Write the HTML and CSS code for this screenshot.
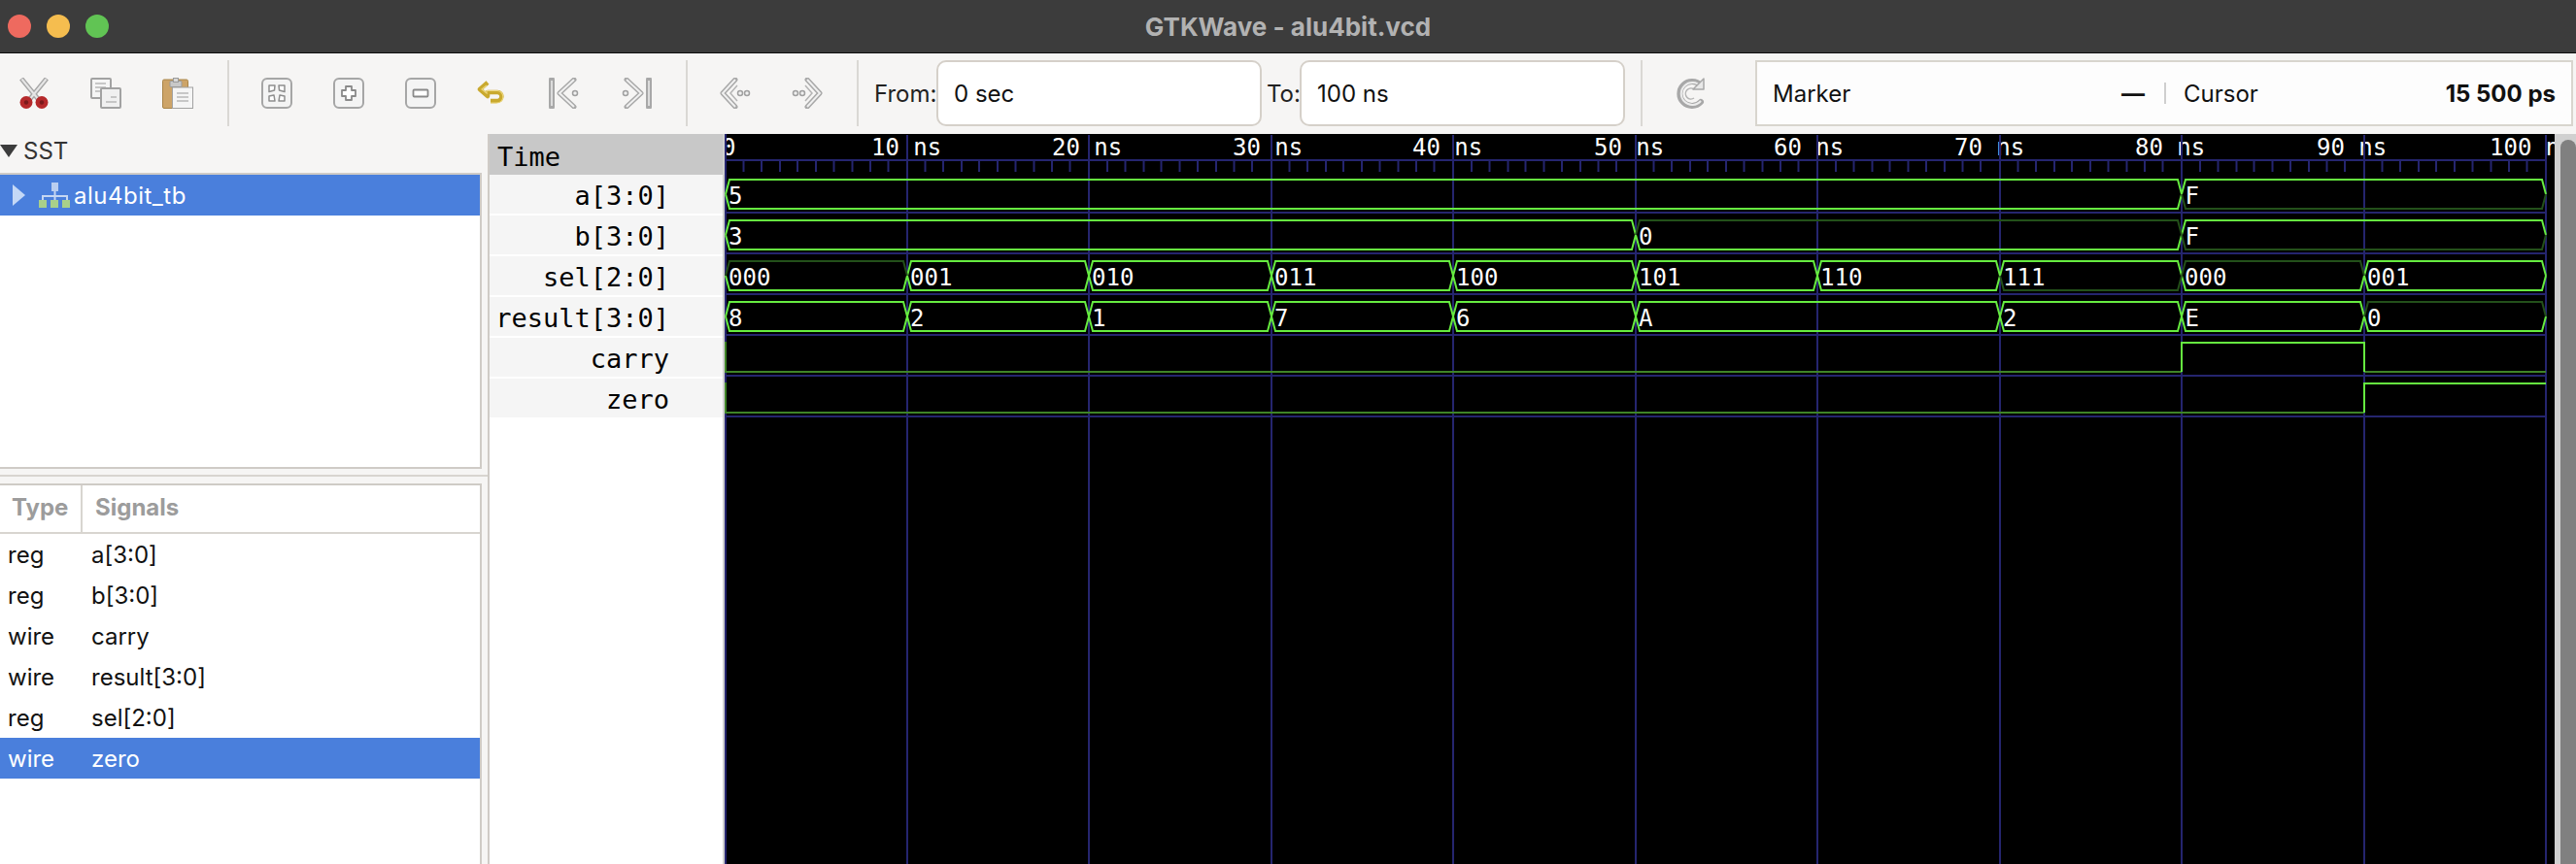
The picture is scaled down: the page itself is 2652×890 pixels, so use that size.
FILE: index.html
```html
<!DOCTYPE html>
<html lang="en">
<head>
  <meta charset="UTF-8" />
  <title>GTKWave - alu4bit.vcd</title>
  <link rel="stylesheet" href="styles.css">
</head>
<body>
  <div class="titlebar">
    <div class="lights">
      <span class="light red"></span>
      <span class="light yellow"></span>
      <span class="light green"></span>
    </div>
    <div class="title">GTKWave - alu4bit.vcd</div>
  </div>

  <div class="toolbar">
    <div class="tools first">
      <div class="tool">
        <svg viewBox="0 0 32 32" class="icon">
          <path d="M3 1 L21 23 M29 1 L11 23" stroke="#a6a6a6" stroke-width="5" fill="none"/>
          <path d="M3.500 1.500 L21 23 M28.500 1.500 L11 23" stroke="#e6e6e6" stroke-width="2" fill="none"/>
          <circle cx="8" cy="25.500" r="6.500" fill="#b5292b"/>
          <circle cx="24" cy="25.500" r="6.500" fill="#b5292b"/>
          <circle cx="8" cy="25.500" r="2.200" fill="#7a1a1c"/>
          <circle cx="24" cy="25.500" r="2.200" fill="#7a1a1c"/>
        </svg>
      </div>
      <div class="tool">
        <svg viewBox="0 0 32 32" class="icon">
          <rect x="1" y="1" width="20" height="20" rx="1" fill="#f5f5f5" stroke="#a2a2a2" stroke-width="2"/>
          <path d="M5 6H16M5 10H16M5 14H12" stroke="#b8b8b8" stroke-width="1.500"/>
          <rect x="11" y="11" width="20" height="20" rx="1" fill="#f0f0f0" stroke="#a2a2a2" stroke-width="2"/>
          <path d="M21 20H27M16 25H27" stroke="#b8b8b8" stroke-width="1.500"/>
        </svg>
      </div>
      <div class="tool">
        <svg viewBox="0 0 32 32" class="icon">
          <rect x="0.500" y="2" width="26" height="29.500" rx="1.500" fill="#cda468" stroke="#a98548"/>
          <rect x="10.500" y="10" width="21" height="21.500" fill="#f5f5f5" stroke="#a2a2a2"/>
          <rect x="8" y="3.500" width="12" height="6" rx="1" fill="#c8c8c8" stroke="#9a9a9a"/>
          <rect x="11.500" y="0.500" width="5" height="4" fill="#d8d8d8" stroke="#9a9a9a"/>
          <path d="M15 16H27M15 20H27M15 24H27" stroke="#b8b8b8" stroke-width="1.500"/>
        </svg>
      </div>
    </div>
    <div class="sep"></div>
    <div class="tools">
      <div class="tool">
        <svg viewBox="0 0 32 32" class="icon">
          <rect x="1" y="1" width="30" height="30" rx="5" fill="#f4f4f4" stroke="#a6a6a6" stroke-width="2"/>
          <path d="M8 8H14L13.500 13L8 14.500Z M24 8H18L18.500 13L24 14.500Z M8 24V19L13 18L14 24Z M24 24V19L19 18L18 24Z" fill="#fff" stroke="#8e8e8e" stroke-width="1.500" stroke-linejoin="round"/>
        </svg>
      </div>
      <div class="tool">
        <svg viewBox="0 0 32 32" class="icon">
          <rect x="1" y="1" width="30" height="30" rx="5" fill="#f4f4f4" stroke="#a6a6a6" stroke-width="2"/>
          <path d="M13 9H19V13H23V19H19V23H13V19H9V13H13Z" fill="#fff" stroke="#8a8a8a" stroke-width="1.800" stroke-linejoin="round"/>
        </svg>
      </div>
      <div class="tool">
        <svg viewBox="0 0 32 32" class="icon">
          <rect x="1" y="1" width="30" height="30" rx="5" fill="#f4f4f4" stroke="#a6a6a6" stroke-width="2"/>
          <rect x="8.500" y="12.500" width="15" height="7" rx="1" fill="#fff" stroke="#8a8a8a" stroke-width="1.800"/>
        </svg>
      </div>
      <div class="tool">
        <svg viewBox="0 0 32 32" class="icon">
          <path d="M11 5 L3 12 L11 19 V15 H21 C27 15 27 24 20 24 H14" fill="none" stroke="#c9a92e" stroke-width="4.500" stroke-linejoin="round"/>
          <path d="M10 8 L5 12 L10 16 V13.500 H21 C29 14 29 26 20 26 H14" fill="none" stroke="#ecd67a" stroke-width="1.200"/>
        </svg>
      </div>
      <div class="tool">
        <svg viewBox="0 0 32 32" class="icon">
          <path d="M3 2V30" stroke="#a8a8a8" stroke-width="6" stroke-linecap="round"/>
          <path d="M3 3V29" stroke="#dcdcdc" stroke-width="2"/>
          <path d="M26 2 L11 16 L26 30" fill="none" stroke="#a8a8a8" stroke-width="5" stroke-linejoin="round" stroke-linecap="round"/>
          <path d="M26 2 L11 16 L26 30" fill="none" stroke="#f0f0f0" stroke-width="2"/>
          <circle cx="27" cy="16" r="2.500" fill="#f0f0f0" stroke="#a0a0a0" stroke-width="1.500"/>
        </svg>
      </div>
      <div class="tool">
        <svg viewBox="0 0 32 32" class="icon mirror">
          <path d="M3 2V30" stroke="#a8a8a8" stroke-width="6" stroke-linecap="round"/>
          <path d="M3 3V29" stroke="#dcdcdc" stroke-width="2"/>
          <path d="M26 2 L11 16 L26 30" fill="none" stroke="#a8a8a8" stroke-width="5" stroke-linejoin="round" stroke-linecap="round"/>
          <path d="M26 2 L11 16 L26 30" fill="none" stroke="#f0f0f0" stroke-width="2"/>
          <circle cx="27" cy="16" r="2.500" fill="#f0f0f0" stroke="#a0a0a0" stroke-width="1.500"/>
        </svg>
      </div>
    </div>
    <div class="sep"></div>
    <div class="tools">
      <div class="tool">
        <svg viewBox="0 0 32 32" class="icon">
          <path d="M16 2 L3 16 L16 30" fill="none" stroke="#a8a8a8" stroke-width="5" stroke-linejoin="round" stroke-linecap="round"/>
          <path d="M16 2 L3 16 L16 30" fill="none" stroke="#f0f0f0" stroke-width="2"/>
          <path d="M18 8 L11 16 L18 24" fill="none" stroke="#b4b4b4" stroke-width="1.500"/>
          <circle cx="21" cy="16" r="2.500" fill="#f0f0f0" stroke="#a0a0a0" stroke-width="1.500"/>
          <circle cx="28" cy="16" r="2.500" fill="#f0f0f0" stroke="#a0a0a0" stroke-width="1.500"/>
        </svg>
      </div>
      <div class="tool">
        <svg viewBox="0 0 32 32" class="icon mirror">
          <path d="M16 2 L3 16 L16 30" fill="none" stroke="#a8a8a8" stroke-width="5" stroke-linejoin="round" stroke-linecap="round"/>
          <path d="M16 2 L3 16 L16 30" fill="none" stroke="#f0f0f0" stroke-width="2"/>
          <path d="M18 8 L11 16 L18 24" fill="none" stroke="#b4b4b4" stroke-width="1.500"/>
          <circle cx="21" cy="16" r="2.500" fill="#f0f0f0" stroke="#a0a0a0" stroke-width="1.500"/>
          <circle cx="28" cy="16" r="2.500" fill="#f0f0f0" stroke="#a0a0a0" stroke-width="1.500"/>
        </svg>
      </div>
    </div>
    <div class="sep"></div>
    <span class="field-label from">From:</span>
    <div class="field">0 sec</div>
    <span class="field-label to">To:</span>
    <div class="field">100 ns</div>
    <div class="sep last"></div>
    <div class="tool">
      <svg viewBox="0 0 32 32" class="icon">
        <path d="M25 8 A12.500 12.500 0 1 0 25 25" fill="none" stroke="#a8a8a8" stroke-width="6" stroke-linecap="round"/>
        <path d="M25 9 A11.500 11.500 0 1 0 25 24" fill="none" stroke="#ececec" stroke-width="2"/>
        <path d="M18 12 A5.500 5.500 0 1 0 18 21" fill="none" stroke="#b4b4b4" stroke-width="1.500"/>
        <path d="M28 1 V12 H17 Z" fill="#e8e8e8" stroke="#a8a8a8" stroke-width="1.500" stroke-linejoin="round"/>
      </svg>
    </div>
    <div class="info">
      <div class="info-part marker">
        <span>Marker</span>
        <span class="info-value">—</span>
      </div>
      <div class="info-sep"></div>
      <div class="info-part cursor">
        <span>Cursor</span>
        <span class="info-value">15 500 ps</span>
      </div>
    </div>
  </div>

  <div class="main">
    <div class="sidebar">
      <div class="sst-head">
        <span class="sst-arrow"></span>
        <span>SST</span>
      </div>
      <div class="tree">
        <div class="tree-row">
          <span class="tree-arrow"></span>
          <svg viewBox="0 0 32 26" class="tree-icon">
            <rect x="13" y="0" width="7" height="9" fill="#b9cdf0"/>
            <path d="M16.500 9V14 M4 19V14H29V19 M16.500 14V19" stroke="#c5d6f2" stroke-width="2" fill="none"/>
            <rect x="0" y="18" width="8" height="8" fill="#a9d08a"/>
            <rect x="12" y="18" width="8" height="8" fill="#a9d08a"/>
            <rect x="24" y="18" width="8" height="8" fill="#a9d08a"/>
          </svg>
          <span class="tree-label">alu4bit_tb</span>
        </div>
      </div>
      <div class="pane-handle"></div>
      <div class="signals">
        <div class="signals-head">
          <div class="col-type">Type</div>
          <div class="col-name">Signals</div>
        </div>
        <div class="signal-row"><span class="cell-type">reg</span><span>a[3:0]</span></div>
        <div class="signal-row"><span class="cell-type">reg</span><span>b[3:0]</span></div>
        <div class="signal-row"><span class="cell-type">wire</span><span>carry</span></div>
        <div class="signal-row"><span class="cell-type">wire</span><span>result[3:0]</span></div>
        <div class="signal-row"><span class="cell-type">reg</span><span>sel[2:0]</span></div>
        <div class="signal-row selected"><span class="cell-type">wire</span><span>zero</span></div>
      </div>
    </div>

    <div class="names">
      <div class="names-head">Time</div>
      <div class="name-row">a[3:0]</div>
      <div class="name-row">b[3:0]</div>
      <div class="name-row">sel[2:0]</div>
      <div class="name-row">result[3:0]</div>
      <div class="name-row">carry</div>
      <div class="name-row">zero</div>
    </div>

    <div class="wave">
      <svg class="wave-svg" viewBox="746 138 1884 752" width="1884" height="752">
        <!-- ruler labels -->
        <g class="ruler-text">
          <text x="743" y="160">0</text>
          <text x="897" y="160">10 ns</text>
          <text x="1083" y="160">20 ns</text>
          <text x="1269" y="160">30 ns</text>
          <text x="1454" y="160">40 ns</text>
          <text x="1641" y="160">50 ns</text>
          <text x="1826" y="160">60 ns</text>
          <text x="2012" y="160">70 ns</text>
          <text x="2198" y="160">80 ns</text>
          <text x="2385" y="160">90 ns</text>
          <text x="2563" y="160">100 ns</text>
        </g>
        <!-- grid -->
        <path class="grid" d="M747 138V890M934 139V890M1121 139V890M1309 139V890M1496 139V890M1684 139V890M1871 139V890M2059 139V890M2246 139V890M2434 139V890M2621 139V890"/>
        <path class="grid" d="M746 165H2621M746 219H2621M746 261H2621M746 303H2621M746 345H2621M746 387H2621M746 429H2621"/>
        <path class="grid ticks" d="M765.500 165v12m18.500-12v12m19-12v12m18-12v12m19-12v12m18.500-12v12m19-12v12m18.500-12v12m18.500-12v12
          M952.500 165v12m18.500-12v12m19-12v12m18-12v12m19-12v12m18.500-12v12m19-12v12m18.500-12v12m18.500-12v12
          M1140 165v12m18.500-12v12m19-12v12m18-12v12m19-12v12m18.500-12v12m19-12v12m18.500-12v12m18.500-12v12
          M1327.500 165v12m18.500-12v12m19-12v12m18-12v12m19-12v12m18.500-12v12m19-12v12m18.500-12v12m18.500-12v12
          M1515 165v12m18.500-12v12m19-12v12m18-12v12m19-12v12m18.500-12v12m19-12v12m18.500-12v12m18.500-12v12
          M1702.500 165v12m18.500-12v12m19-12v12m18-12v12m19-12v12m18.500-12v12m19-12v12m18.500-12v12m18.500-12v12
          M1890 165v12m18.500-12v12m19-12v12m18-12v12m19-12v12m18.500-12v12m19-12v12m18.500-12v12m18.500-12v12
          M2077.500 165v12m18.500-12v12m19-12v12m18-12v12m19-12v12m18.500-12v12m19-12v12m18.500-12v12m18.500-12v12
          M2265 165v12m18.500-12v12m19-12v12m18-12v12m19-12v12m18.500-12v12m19-12v12m18.500-12v12m18.500-12v12
          M2452.500 165v12m18.500-12v12m19-12v12m18-12v12m19-12v12m18.500-12v12m19-12v12m18.500-12v12m18.500-12v12"/>
        <!-- a -->
        <path class="sig" d="M747 200l4-15H2242l4 15M747 200l4 15H2242l4-15M2246 200l4-15H2617l4 15"/>
        <path class="sig dim" d="M2246 200l4 15H2617l4-15"/>
        <!-- b -->
        <path class="sig" d="M747 242l4-15H1680l4 15M747 242l4 15H1680l4-15M1684 242l4 15H2242l4-15M2246 242l4-15H2617l4 15"/>
        <path class="sig dim" d="M1684 242l4-15H2242l4 15M2246 242l4 15H2617l4-15"/>
        <!-- sel -->
        <path class="sig" d="M934 284l4-15H1117l4 15M1121 284l4-15H1305l4 15M1309 284l4-15H1492l4 15M1496 284l4-15H1680l4 15M1684 284l4-15H1867l4 15M1871 284l4-15H2055l4 15M2059 284l4-15H2242l4 15M2434 284l4-15H2617l4 15"/>
        <path class="sig" d="M747 284l4 15H930l4-15M934 284l4 15H1117l4-15M1121 284l4 15H1305l4-15M1309 284l4 15H1492l4-15M1496 284l4 15H1680l4-15M1684 284l4 15H1867l4-15M1871 284l4 15H2055l4-15M2246 284l4 15H2430l4-15M2434 284l4 15H2617l4-15"/>
        <path class="sig dim" d="M747 284l4-15H930l4 15M2246 284l4-15H2430l4 15M2059 284l4 15H2242l4-15"/>
        <!-- result -->
        <path class="sig" d="M747 326l4-15H930l4 15M934 326l4-15H1117l4 15M1121 326l4-15H1305l4 15M1309 326l4-15H1492l4 15M1496 326l4-15H1680l4 15M1684 326l4-15H2055l4 15M2059 326l4-15H2242l4 15M2246 326l4-15H2430l4 15"/>
        <path class="sig" d="M747 326l4 15H930l4-15M934 326l4 15H1117l4-15M1121 326l4 15H1305l4-15M1309 326l4 15H1492l4-15M1496 326l4 15H1680l4-15M1684 326l4 15H2055l4-15M2059 326l4 15H2242l4-15M2246 326l4 15H2430l4-15M2434 326l4 15H2617l4-15"/>
        <path class="sig dim" d="M2434 326l4-15H2617l4 15"/>
        <!-- carry, zero -->
        <path class="sig low" d="M747 352V383H2246M2434 383H2621M747 394V425H2434"/>
        <path class="sig" d="M2246 383V353H2434V383M2434 425V395H2621"/>
        <!-- values -->
        <g class="val-text">
          <text x="750" y="209.500">5</text>
          <text x="2249.500" y="209.500">F</text>
          <text x="750" y="251.500">3</text>
          <text x="1687" y="251.500">0</text>
          <text x="2249.500" y="251.500">F</text>
          <text x="750" y="293.500">000</text>
          <text x="937" y="293.500">001</text>
          <text x="1124" y="293.500">010</text>
          <text x="1312" y="293.500">011</text>
          <text x="1499" y="293.500">100</text>
          <text x="1687" y="293.500">101</text>
          <text x="1874" y="293.500">110</text>
          <text x="2062" y="293.500">111</text>
          <text x="2249" y="293.500">000</text>
          <text x="2437" y="293.500">001</text>
          <text x="750" y="335.500">8</text>
          <text x="937" y="335.500">2</text>
          <text x="1124" y="335.500">1</text>
          <text x="1312" y="335.500">7</text>
          <text x="1499" y="335.500">6</text>
          <text x="1687" y="335.500">A</text>
          <text x="2062" y="335.500">2</text>
          <text x="2249.500" y="335.500">E</text>
          <text x="2437" y="335.500">0</text>
        </g>
      </svg>
      <div class="vscroll"><div class="vthumb"></div></div>
    </div>
  </div>
</body>
</html>
```

FILE: styles.css
```css
html, body {
  margin: 0;
  padding: 0;
}

body {
  width: 2652px;
  height: 890px;
  overflow: hidden;
  background: #f6f5f4;
  font-family: 'Inter', 'Liberation Sans', sans-serif;
  font-size: 24px;
  color: #111;
  display: flex;
  flex-direction: column;
}

/* title bar */
.titlebar {
  height: 55px;
  box-sizing: border-box;
  flex: none;
  background: #3c3c3c;
  border-bottom: 1px solid #0c0c0c;
  display: grid;
  grid-template-columns: 1fr auto 1fr;
  align-items: center;
}

.lights {
  display: flex;
  gap: 16px;
  padding-left: 8px;
}

.light {
  width: 24px;
  height: 24px;
  border-radius: 50%;
}

.red { background: #ee6a5f; }
.yellow { background: #f5bd4f; }
.green { background: #61c454; }

.title {
  font-size: 26px;
  font-weight: 700;
  color: #b2b2b2;
}

/* toolbar */
.toolbar {
  height: 83px;
  flex: none;
  box-sizing: border-box;
  padding: 7px 2px 8px 0;
  display: flex;
  align-items: stretch;
}

.tools {
  display: flex;
}

.tools.first {
  margin-left: -2px;
}

.tool {
  width: 74px;
  flex: none;
  display: flex;
  align-items: center;
  justify-content: center;
}

.icon {
  width: 32px;
  height: 32px;
  filter: blur(0.4px);
}

.mirror {
  transform: scaleX(-1);
}

.sep {
  width: 2px;
  flex: none;
  margin: 0 12px 0 14px;
  background: #dad8d4;
}

.sep.last {
  margin: 0 14px 0 16px;
}

.field-label {
  align-self: center;
  color: #222;
}

.field-label.from {
  margin-left: 4px;
  width: 64px;
}

.field-label.to {
  margin-left: 5px;
  width: 34px;
}

.field {
  width: 335px;
  box-sizing: border-box;
  flex: none;
  background: #fff;
  border: 2px solid #d5d0c9;
  border-radius: 10px;
  padding-left: 16px;
  display: flex;
  align-items: center;
}

.info {
  width: 842px;
  margin-left: 28px;
  box-sizing: border-box;
  flex: none;
  background: #fdfdfd;
  border: 2px solid #d8d5ce;
  display: flex;
  align-items: center;
}

.info-part {
  display: flex;
  justify-content: space-between;
  align-items: center;
}

.marker {
  width: 419px;
  box-sizing: border-box;
  padding: 0 20px 0 16px;
}

.cursor {
  flex: 1;
  padding: 0 16px 0 18px;
}

.info-sep {
  width: 2px;
  height: 22px;
  background: #cfcfcf;
}

.info-value {
  font-weight: 700;
}

/* main area */
.main {
  flex: 1;
  display: flex;
  min-height: 0;
}

.sidebar {
  width: 502px;
  flex: none;
  display: flex;
  flex-direction: column;
}

.sst-head {
  height: 40px;
  flex: none;
  display: flex;
  align-items: center;
  gap: 6px;
  padding-bottom: 6px;
  box-sizing: border-box;
  color: #333;
}

.sst-arrow {
  width: 0;
  height: 0;
  border-left: 9px solid transparent;
  border-right: 9px solid transparent;
  border-top: 13px solid #3c3c3c;
}

.tree {
  width: 496px;
  height: 305px;
  flex: none;
  box-sizing: border-box;
  background: #fff;
  border: 2px solid #cfcbc6;
  border-left: none;
}

.tree-row {
  height: 42px;
  background: #4a7fdc;
  color: #fff;
  display: flex;
  align-items: center;
}

.tree-label {
  letter-spacing: 0.5px;
}

.tree-arrow {
  width: 0;
  height: 0;
  margin-left: 13px;
  border-top: 11px solid transparent;
  border-bottom: 11px solid transparent;
  border-left: 13px solid #c4d8f6;
}

.tree-icon {
  width: 32px;
  height: 26px;
  margin: 0 4px 0 14px;
}

.pane-handle {
  height: 15px;
  flex: none;
  box-sizing: border-box;
  border-bottom: 2px solid #d8d5d0;
  position: relative;
  top: -7px;
}

.signals {
  width: 496px;
  flex: 1;
  box-sizing: border-box;
  background: #fff;
  border-top: 2px solid #cfcbc6;
  border-right: 2px solid #cfcbc6;
}

.signals-head {
  height: 50px;
  box-sizing: border-box;
  border-bottom: 2px solid #d8d5d0;
  display: flex;
  font-weight: 700;
  color: #9c9c9c;
}

.col-type {
  width: 85px;
  box-sizing: border-box;
  padding-left: 12px;
  border-right: 2px solid #d8d5d0;
  line-height: 46px;
}

.col-name {
  padding-left: 13px;
  line-height: 46px;
}

.signal-row {
  height: 42px;
  display: flex;
  align-items: center;
  color: #111;
}

.signal-row.selected {
  background: #4a7fdc;
  color: #fff;
}

.cell-type {
  width: 94px;
  box-sizing: border-box;
  padding-left: 8px;
}

/* signal names */
.names {
  width: 244px;
  flex: none;
  box-sizing: border-box;
  background: #fff;
  border-left: 2px solid #cfcbc6;
  border-right: 2px solid #d0d0d0;
  font-family: 'DejaVu Sans Mono', monospace;
  font-size: 27px;
  color: #000;
}

.names-head {
  height: 42px;
  box-sizing: border-box;
  background: #c8c8c8;
  padding: 3px 0 0 8px;
  line-height: 42px;
}

.name-row {
  height: 42px;
  box-sizing: border-box;
  background: #f5f5f5;
  border-bottom: 2px solid #fff;
  padding-top: 2px;
  line-height: 40px;
  text-align: right;
  padding-right: 55px;
}

/* wave canvas */
.wave {
  flex: 1;
  display: flex;
  background: #000;
}

.wave-svg {
  display: block;
  flex: none;
}

.ruler-text text, .val-text text {
  font-family: 'DejaVu Sans Mono', monospace;
  font-size: 24px;
  fill: #fff;
}

.grid {
  fill: none;
  stroke: #25256f;
  stroke-width: 2;
}

.sig {
  fill: none;
  stroke: #66ec40;
  stroke-width: 2;
}

.sig.dim {
  stroke: #23501a;
}

.sig.low {
  stroke: #3f8427;
}

.vscroll {
  flex: 1;
  background: #d0d0d0;
  padding: 6px 0 0 6px;
  box-sizing: border-box;
}

.vthumb {
  height: 100%;
  background: #808080;
  border-radius: 8px 8px 0 0;
}
```
